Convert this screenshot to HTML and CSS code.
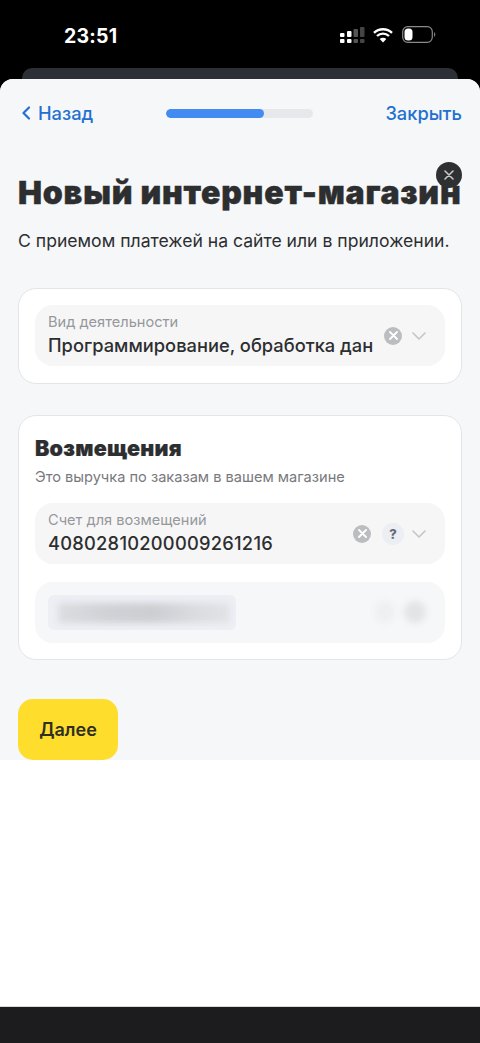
FILE: index.html
```html
<!DOCTYPE html>
<html lang="ru">
<head>
<meta charset="utf-8">
<title>Новый интернет-магазин</title>
<link rel="stylesheet" href="styles.css">
</head>
<body>
<div class="status">
  <span class="time">23:51</span>
  <div class="status-icons">
    <svg class="signal" width="25" height="16" viewBox="0 0 25 16">
      <rect x="0" y="6" width="4.500" height="4" rx="1" fill="#fff"/><rect x="0" y="12" width="4.500" height="4" rx="1" fill="#fff"/>
      <rect x="7" y="4" width="4.500" height="6" rx="1" fill="#fff"/><rect x="7" y="12" width="4.500" height="4" rx="1" fill="#fff"/>
      <rect x="13.500" y="2" width="4.500" height="8" rx="1" fill="#555"/><rect x="13.500" y="12" width="4.500" height="4" rx="1" fill="#555"/>
      <rect x="20" y="0" width="4.500" height="10" rx="1" fill="#444"/><rect x="20" y="12" width="4.500" height="4" rx="1" fill="#444"/>
    </svg>
    <svg class="wifi" width="22" height="16" viewBox="0 0 21 16">
      <path d="M1.500 5.800a13 13 0 0 1 18 0M4.500 9a8.700 8.700 0 0 1 12 0" fill="none" stroke="#fff" stroke-width="2.400"/>
      <path d="M10.500 15.500l-3.300-3.500a4.700 4.700 0 0 1 6.600 0z" fill="#fff"/>
    </svg>
    <svg class="battery" width="34" height="17" viewBox="0 0 34 17">
      <rect x="0.700" y="0.700" width="29.600" height="15.600" rx="5" fill="none" stroke="#8a8a8a" stroke-width="1.200"/>
      <rect x="2.500" y="2.500" width="8" height="12" rx="3.500" fill="#fff"/>
      <path d="M32 6a3 3 0 0 1 0 5z" fill="#777"/>
    </svg>
  </div>
</div>
<div class="behind"></div>
<main class="sheet">
  <div class="sheet-main">
    <header class="nav">
      <a class="nav-link back">
        <svg width="10" height="14" viewBox="0 0 10 14"><path d="M8 1.500L2.500 7 8 12.500" fill="none" stroke="#2271d0" stroke-width="2.200" stroke-linecap="round" stroke-linejoin="round"/></svg>
        Назад
      </a>
      <div class="progress"><div class="progress-fill"></div></div>
      <a class="nav-link">Закрыть</a>
    </header>
    <button class="dismiss" aria-label="Закрыть">
      <svg width="10" height="10" viewBox="0 0 10 10"><path d="M1 1l8 8M9 1l-8 8" stroke="#c9c9c9" stroke-width="1.600" stroke-linecap="round"/></svg>
    </button>
    <h1 class="title">Новый интернет-магазин</h1>
    <p class="lead">С приемом платежей на сайте или в приложении.</p>

    <section class="card card-first">
      <div class="field">
        <div class="field-text">
          <span class="field-label">Вид деятельности</span>
          <span class="field-value">Программирование, обработка дан</span>
        </div>
        <span class="clear"><svg width="9" height="9" viewBox="0 0 9 9"><path d="M1 1l7 7M8 1L1 8" stroke="#fff" stroke-width="1.800" stroke-linecap="round"/></svg></span>
        <svg class="chev" width="14" height="8" viewBox="0 0 14 8"><path d="M1 1l6 6 6-6" fill="none" stroke="#c4c5c8" stroke-width="1.600" stroke-linecap="round" stroke-linejoin="round"/></svg>
      </div>
    </section>

    <section class="card card-second">
      <h2 class="card-title">Возмещения</h2>
      <p class="card-sub">Это выручка по заказам в вашем магазине</p>
      <div class="field">
        <div class="field-text">
          <span class="field-label">Счет для возмещений</span>
          <span class="field-value field-number">40802810200009261216</span>
        </div>
        <span class="clear"><svg width="9" height="9" viewBox="0 0 9 9"><path d="M1 1l7 7M8 1L1 8" stroke="#fff" stroke-width="1.800" stroke-linecap="round"/></svg></span>
        <span class="help">?</span>
        <svg class="chev" width="14" height="8" viewBox="0 0 14 8"><path d="M1 1l6 6 6-6" fill="none" stroke="#c4c5c8" stroke-width="1.600" stroke-linecap="round" stroke-linejoin="round"/></svg>
      </div>
      <div class="field field-blurred">
        <div class="blur-pill"><div class="blur-line"></div></div>
        <div class="blur-dot blur-dot-a"></div>
        <div class="blur-dot blur-dot-b"></div>
      </div>
    </section>

    <button class="next">Далее</button>
  </div>
  <div class="sheet-white"></div>
</main>
<div class="home-bar"></div>
</body>
</html>
```

FILE: styles.css
```css
* { box-sizing: border-box; }
html, body { margin: 0; padding: 0; }
body {
  width: 480px;
  height: 1043px;
  overflow: hidden;
  background: #000;
  font-family: Inter, "Noto Sans", sans-serif;
  display: flex;
  flex-direction: column;
}
.status {
  height: 68px;
  flex: none;
  display: flex;
  align-items: flex-start;
  justify-content: space-between;
  padding: 25px 44px 0 64px;
}
.time { color: #fff; font-size: 19.500px; font-weight: 700; line-height: 23px; letter-spacing: 0.2px; }
.status-icons { display: flex; align-items: center; gap: 7px; margin-top: 1px; }
.wifi { margin-right: 1px; }
.behind { height: 11px; flex: none; margin: 0 22px; background: #2c2f36; border-radius: 10px 10px 0 0; }
.sheet {
  flex: 1;
  display: flex;
  flex-direction: column;
  background: #fff;
  border-radius: 13px 13px 0 0;
  overflow: hidden;
}
.sheet-main {
  position: relative;
  height: 681px;
  flex: none;
  background: #f6f7f9;
  padding: 0 18px;
}
.sheet-white { flex: 1; background: #fff; }
.nav {
  height: 68px;
  display: flex;
  align-items: center;
  justify-content: space-between;
}
.nav-link { color: #2271d0; font-size: 18.300px; font-weight: 500; line-height: 24px; }
.back { display: flex; align-items: center; gap: 7px; padding-left: 3px; }
.progress {
  width: 147px;
  height: 9px;
  border-radius: 5px;
  background: #e6e8eb;
  overflow: hidden;
}
.progress-fill { width: 98px; height: 100%; border-radius: 5px; background: #428bf0; }
.dismiss {
  position: absolute;
  top: 83px;
  left: 436px;
  width: 26px;
  height: 26px;
  padding: 0;
  border: 0;
  border-radius: 50%;
  background: #2f3032;
  display: flex;
  align-items: center;
  justify-content: center;
  z-index: 2;
}
.title {
  margin: 24px 0 0;
  font-size: 32px;
  line-height: 44px;
  font-weight: 900;
  letter-spacing: 0.8px;
  -webkit-text-stroke: 0.4px #2d2e30;
  color: #2d2e30;
  white-space: nowrap;
}
.lead {
  margin: 14px 0 0;
  font-size: 17.600px;
  line-height: 24px;
  color: #2d2e30;
  white-space: nowrap;
}
.card {
  background: #fff;
  border: 1px solid #e3e5e8;
  border-radius: 18px;
  padding: 16px 16px;
}
.card-first { margin-top: 35px; height: 96px; }
.card-second { margin-top: 31px; height: 245px; padding-top: 17px; }
.card-title { margin: 0; font-size: 21.500px; line-height: 30px; font-weight: 900; letter-spacing: 0.25px; -webkit-text-stroke: 0.2px #2d2e30; color: #2d2e30; }
.card-sub { margin: 4px 0 0; font-size: 14.600px; line-height: 20px; color: #77797d; }
.card-sub + .field { margin-top: 16px; }
.field {
  height: 61px;
  background: #f6f6f7;
  border-radius: 18px;
  display: flex;
  align-items: center;
  padding: 0 19px 0 13px;
}
.field-text { flex: 1; min-width: 0; display: flex; flex-direction: column; }
.field-label { font-size: 14.600px; line-height: 19px; color: #96989c; }
.field-value { font-size: 18.300px; line-height: 27px; font-weight: 500; color: #2d2e30; white-space: nowrap; }
.field-number { letter-spacing: 0.25px; }
.clear {
  width: 18px;
  height: 18px;
  flex: none;
  border-radius: 50%;
  background: #bcbdbf;
  display: flex;
  align-items: center;
  justify-content: center;
}
.help {
  width: 22px;
  height: 22px;
  margin-left: 11px;
  margin-right: -2px;
  flex: none;
  border-radius: 50%;
  background: #ebeef3;
  color: #666b76;
  font-size: 13px;
  font-weight: 800;
  display: flex;
  align-items: center;
  justify-content: center;
}
.chev { flex: none; margin-left: 10px; }
.field-blurred { margin-top: 18px; position: relative; background: #f6f7f8; }
.blur-pill {
  width: 188px;
  height: 35px;
  border-radius: 6px;
  background: #edeff4;
  display: flex;
  align-items: center;
  padding-left: 10px;
}
.blur-line {
  width: 172px;
  height: 20px;
  background: linear-gradient(90deg, #dcdde1, #d0d1d5 30%, #cdced2 55%, #dbdce0 80%, #e2e3e7);
  filter: blur(3px);
  border-radius: 4px;
}
.blur-dot { position: absolute; top: 19px; filter: blur(3px); border-radius: 50%; }
.blur-dot-a { left: 340px; width: 20px; height: 22px; background: #eeeff1; }
.blur-dot-b { left: 369px; width: 22px; height: 22px; background: #e3e4e7; }
.next {
  position: absolute;
  left: 18px;
  bottom: 0;
  width: 100px;
  height: 61px;
  border: 0;
  border-radius: 15px;
  background: #ffdd2d;
  color: #2d2e24;
  font-family: inherit;
  font-size: 18px;
  font-weight: 600;
}
.home-bar { height: 37px; flex: none; background: #1c1c1e; border-top: 1px solid #d8d8d8; }
```
